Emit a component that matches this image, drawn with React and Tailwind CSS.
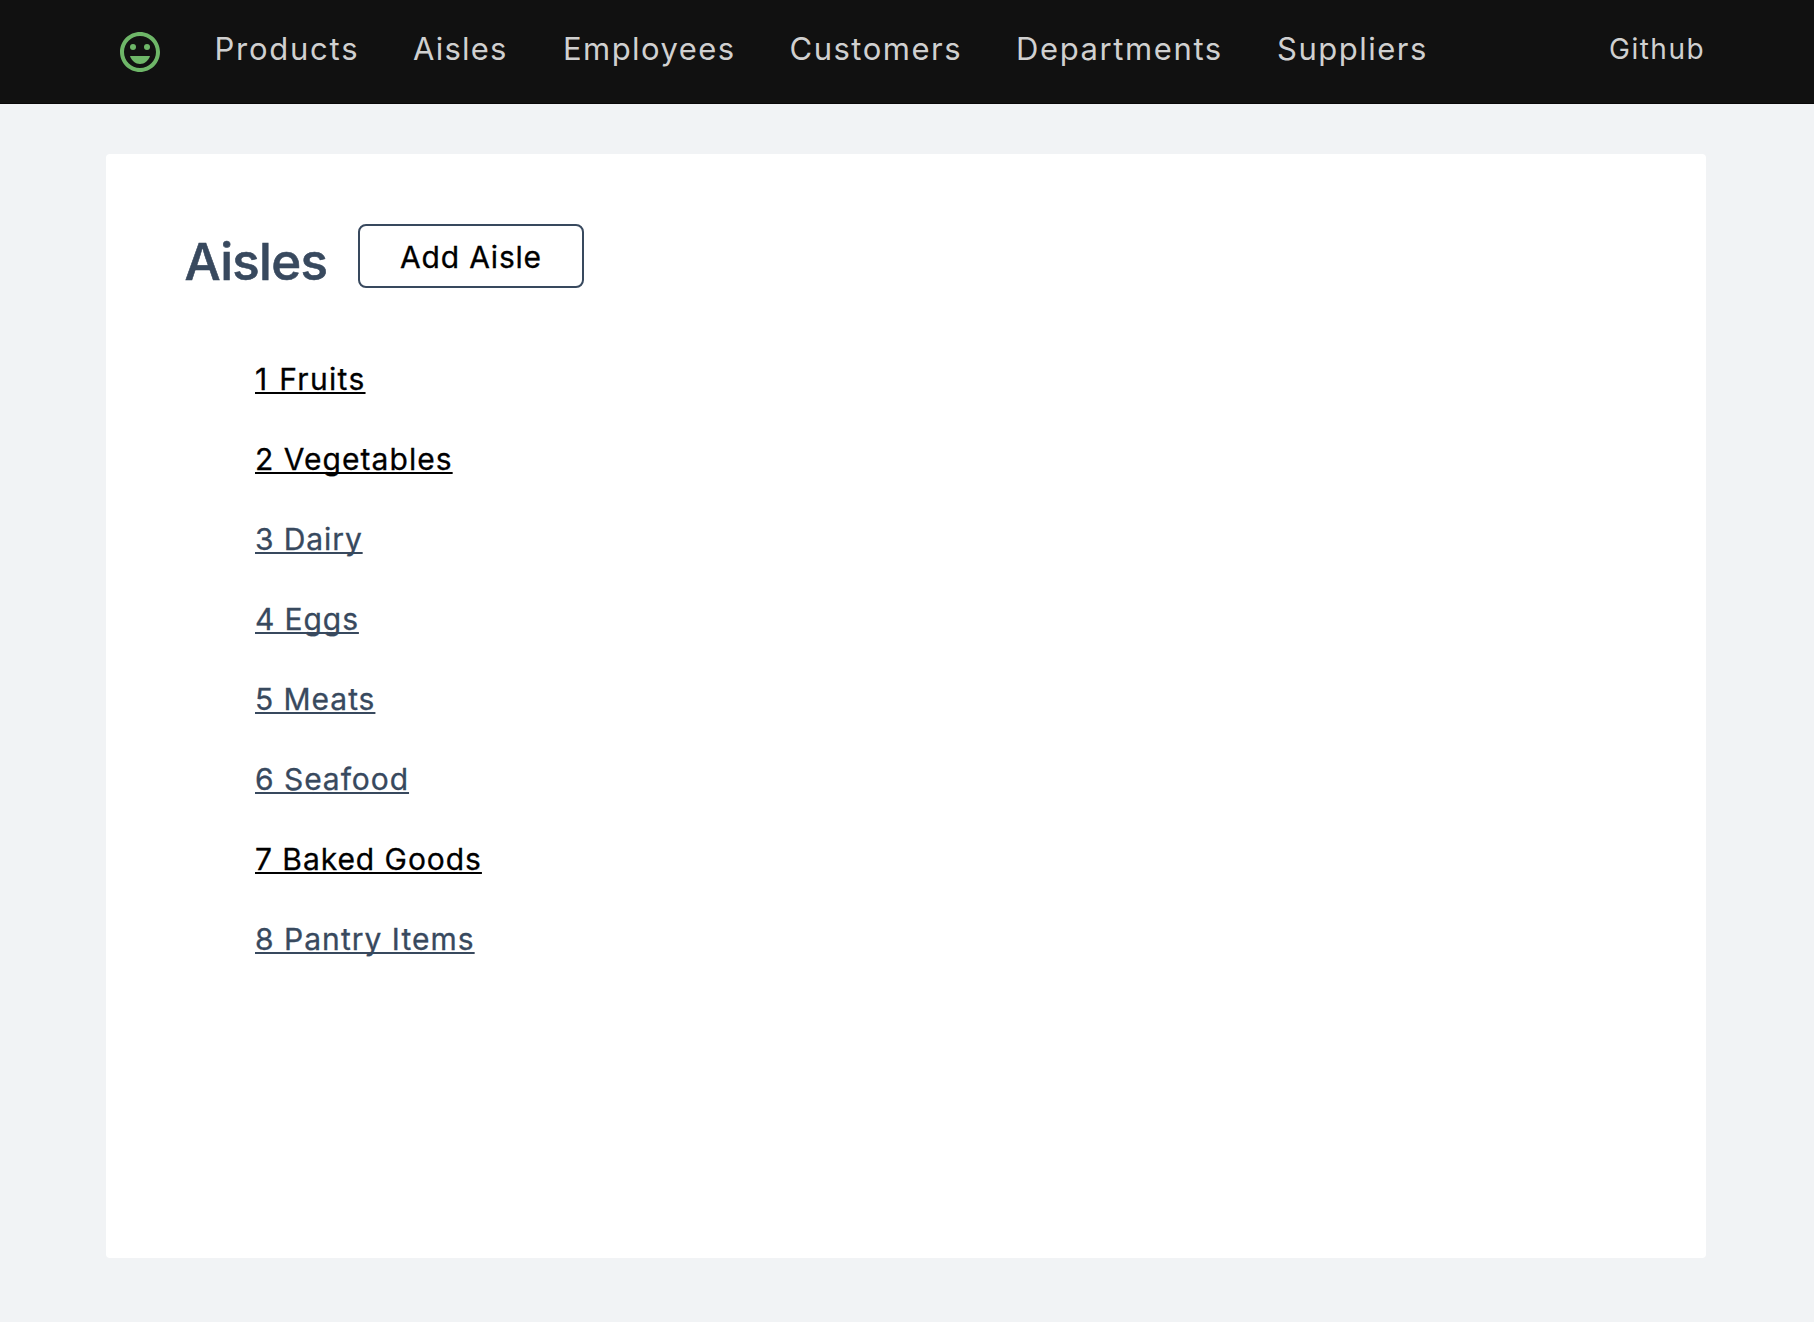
const navLinks = [
  { label: "Products", className: "w-[198.5px] tracking-[1.75px]" },
  { label: "Aisles", className: "w-[150px] tracking-[1.2px]" },
  { label: "Employees", className: "w-[226.5px] tracking-[1.45px]" },
  { label: "Customers", className: "w-[226.5px] tracking-[1.5px]" },
  { label: "Departments", className: "w-[261px] tracking-[1.6px]" },
  { label: "Suppliers", className: "tracking-[1.5px]" },
];

const aisles = [
  { id: 1, name: "Fruits", className: "text-black tracking-[1.3px] [word-spacing:1px]" },
  { id: 2, name: "Vegetables", className: "text-black tracking-[1.05px]" },
  { id: 3, name: "Dairy", className: "text-[#38495e] tracking-[0.9px]" },
  { id: 4, name: "Eggs", className: "text-[#38495e] tracking-[0.9px]" },
  { id: 5, name: "Meats", className: "text-[#38495e] tracking-[0.95px]" },
  { id: 6, name: "Seafood", className: "text-[#38495e] tracking-[0.95px]" },
  { id: 7, name: "Baked Goods", className: "text-black tracking-[0.95px]" },
  { id: 8, name: "Pantry Items", className: "text-[#38495e] tracking-[1.03px]" },
];

function SmileLogo() {
  return (
    <svg viewBox="0 0 24 24" className="size-12 shrink-0 fill-[#6eb668]" aria-hidden="true">
      <path d="M11.99 2C6.47 2 2 6.48 2 12s4.47 10 9.99 10C17.52 22 22 17.52 22 12S17.52 2 11.99 2zM12 20c-4.42 0-8-3.58-8-8s3.58-8 8-8 8 3.58 8 8-3.58 8-8 8z" />
      <circle cx="8.5" cy="9.5" r="1.5" />
      <circle cx="15.5" cy="9.5" r="1.5" />
      <path d="M12 18c2.28 0 4.22-1.66 5-4H7c.78 2.34 2.72 4 5 4z" />
    </svg>
  );
}

function Header() {
  return (
    <header className="flex h-[104px] items-center border-b border-[#080808] bg-[#111] pl-[116px] text-[#d0d0d0]">
      <SmileLogo />
      <nav className="ml-[50.5px] flex flex-1 pb-[6px] text-[31px] leading-9">
        {navLinks.map(({ label, className }) => (
          <a key={label} href="#" className={className}>
            {label}
          </a>
        ))}
      </nav>
      <a href="#" className="w-[205px] pb-[6px] text-[28px] leading-[34px] tracking-[1.5px]">
        Github
      </a>
    </header>
  );
}

export default function App() {
  return (
    <div className="min-h-[1322px] bg-[#f1f3f5] font-[Inter,sans-serif]">
      <Header />
      <main className="mt-[50px] ml-[106px] h-[1104px] w-[1600px] rounded-[4px] bg-white pt-[70px] pl-[78.5px]">
        <div className="flex h-16">
          <h1 className="w-[173.5px] pt-[6px] text-[51px] leading-[64px] font-medium tracking-[-0.7px] text-[#38495e] [-webkit-text-stroke:0.6px]">
            Aisles
          </h1>
          <button className="h-16 w-[226px] rounded-[8px] border-2 border-[#38495e] pt-[2px] text-[30px] leading-none tracking-[0.8px] text-black [-webkit-text-stroke:0.3px]">
            Add Aisle
          </button>
        </div>
        <ul className="mt-[51px] ml-[70.5px] text-[30px] leading-[80px] [-webkit-text-stroke:0.3px]">
          {aisles.map(({ id, name, className }) => (
            <li key={id}>
              <a
                href="#"
                className={`underline decoration-2 underline-offset-2 [text-decoration-skip-ink:none] ${className}`}
              >
                {`${id} ${name}`}
              </a>
            </li>
          ))}
        </ul>
      </main>
    </div>
  );
}
